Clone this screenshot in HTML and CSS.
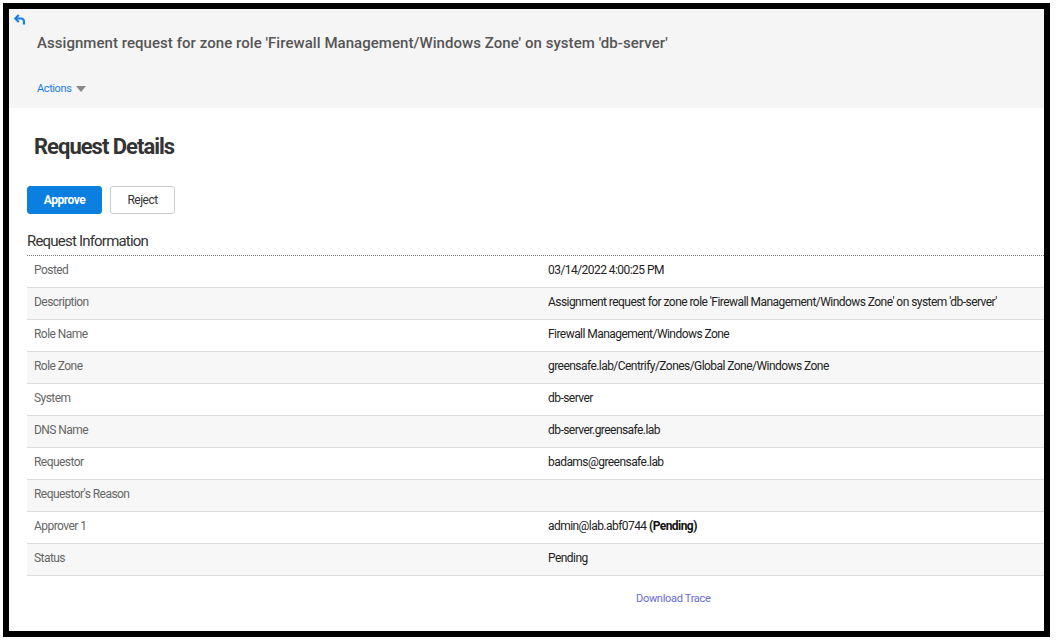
FILE: index.html
```html
<!DOCTYPE html>
<html>
<head>
<meta charset="utf-8">
<link rel="stylesheet" href="styles.css">
</head>
<body>
<div class="frame">
  <header class="head">
    <div class="back">
      <svg width="12" height="11" viewBox="0 0 12 11"><path d="M4.8 1 L1.2 4.5 L4.8 8" fill="none" stroke="#1a7fe8" stroke-width="2.2" stroke-linejoin="miter"/><path d="M2 4.5 H7 Q10 4.5 10 8 V10.5" fill="none" stroke="#1a7fe8" stroke-width="2.2"/></svg>
    </div>
    <h1 class="title">Assignment request for zone role 'Firewall Management/Windows Zone' on system 'db-server'</h1>
    <div class="actions">Actions <span class="caret"></span></div>
  </header>
  <main class="content">
    <h2 class="page-title">Request Details</h2>
    <div class="buttons">
      <button class="btn btn-primary">Approve</button>
      <button class="btn btn-default">Reject</button>
    </div>
    <div class="section-title">Request Information</div>
    <div class="table">
      <div class="row"><div class="lbl">Posted</div><div class="val">03/14/2022 4:00:25 PM</div></div>
      <div class="row alt"><div class="lbl">Description</div><div class="val">Assignment request for zone role 'Firewall Management/Windows Zone' on system 'db-server'</div></div>
      <div class="row"><div class="lbl">Role Name</div><div class="val">Firewall Management/Windows Zone</div></div>
      <div class="row alt"><div class="lbl">Role Zone</div><div class="val">greensafe.lab/Centrify/Zones/Global Zone/Windows Zone</div></div>
      <div class="row"><div class="lbl">System</div><div class="val">db-server</div></div>
      <div class="row alt"><div class="lbl">DNS Name</div><div class="val">db-server.greensafe.lab</div></div>
      <div class="row"><div class="lbl">Requestor</div><div class="val">badams@greensafe.lab</div></div>
      <div class="row alt"><div class="lbl">Requestor's Reason</div><div class="val"></div></div>
      <div class="row"><div class="lbl">Approver 1</div><div class="val">admin@lab.abf0744 <b>(Pending)</b></div></div>
      <div class="row alt"><div class="lbl">Status</div><div class="val">Pending</div></div>
    </div>
    <div class="trace"><a class="trace-link">Download Trace</a></div>
  </main>
</div>
</body>
</html>
```
FILE: styles.css
```css
html, body {
  margin: 0;
  padding: 0;
  background: #fff;
}
body {
  font-family: Roboto, "Liberation Sans", sans-serif;
  color: #333;
}
.frame {
  margin: 3px;
  width: 1035px;
  height: 622px;
  border: 6px solid #000;
  background: #fff;
  overflow: hidden;
}
.head {
  background: #f5f5f5;
  height: 99px;
  padding: 5px 0 0 5px;
  box-sizing: border-box;
}
.back {
  height: 11px;
  line-height: 0;
}
.title {
  margin: 8px 0 0 23px;
  font-size: 15px;
  font-weight: 500;
  letter-spacing: 0.05px;
  color: #555;
  line-height: 20px;
}
.actions {
  margin: 29px 0 0 23px;
  font-size: 11px;
  letter-spacing: -0.4px;
  color: #1a7fe8;
  display: flex;
  align-items: center;
  gap: 5px;
}
.caret {
  width: 0;
  height: 0;
  border-left: 5px solid transparent;
  border-right: 5px solid transparent;
  border-top: 6px solid #888;
}
.content {
  padding: 0 0 0 18px;
}
.page-title {
  margin: 25px 0 0 7px;
  font-size: 22px;
  font-weight: bold;
  letter-spacing: -1px;
  line-height: 28px;
  color: #333;
}
.buttons {
  margin-top: 25px;
  display: flex;
  gap: 8px;
}
.btn {
  height: 28px;
  font-family: inherit;
  font-size: 12px;
  letter-spacing: -0.5px;
  border-radius: 3px;
  cursor: pointer;
}
.btn-primary {
  width: 75px;
  background: #0a7fe0;
  border: 1px solid #0a7fe0;
  color: #fff;
  font-weight: bold;
}
.btn-default {
  width: 65px;
  background: #fff;
  border: 1px solid #ccc;
  color: #333;
}
.section-title {
  margin-top: 18px;
  font-size: 15px;
  letter-spacing: -0.8px;
  line-height: 18px;
  color: #333;
}
.table {
  border-top: 1px dotted #777;
  margin-top: 5px;
}
.row {
  display: grid;
  grid-template-columns: 514px 1fr;
  box-sizing: border-box;
  height: 32px;
  padding-bottom: 4px;
  align-items: center;
  border-bottom: 1px solid #ddd;
  font-size: 12px;
  letter-spacing: -0.55px;
}
.row.alt {
  background: #f7f7f7;
}
.lbl {
  padding-left: 7px;
  color: #666;
}
.val {
  padding-left: 7px;
  color: #222;
  white-space: nowrap;
}
.val b {
  font-weight: bold;
  color: #111;
}
.trace {
  padding: 16px 0 0 609px;
  font-size: 11px;
  letter-spacing: -0.3px;
}
.trace-link {
  color: #6a6ad8;
}
```
